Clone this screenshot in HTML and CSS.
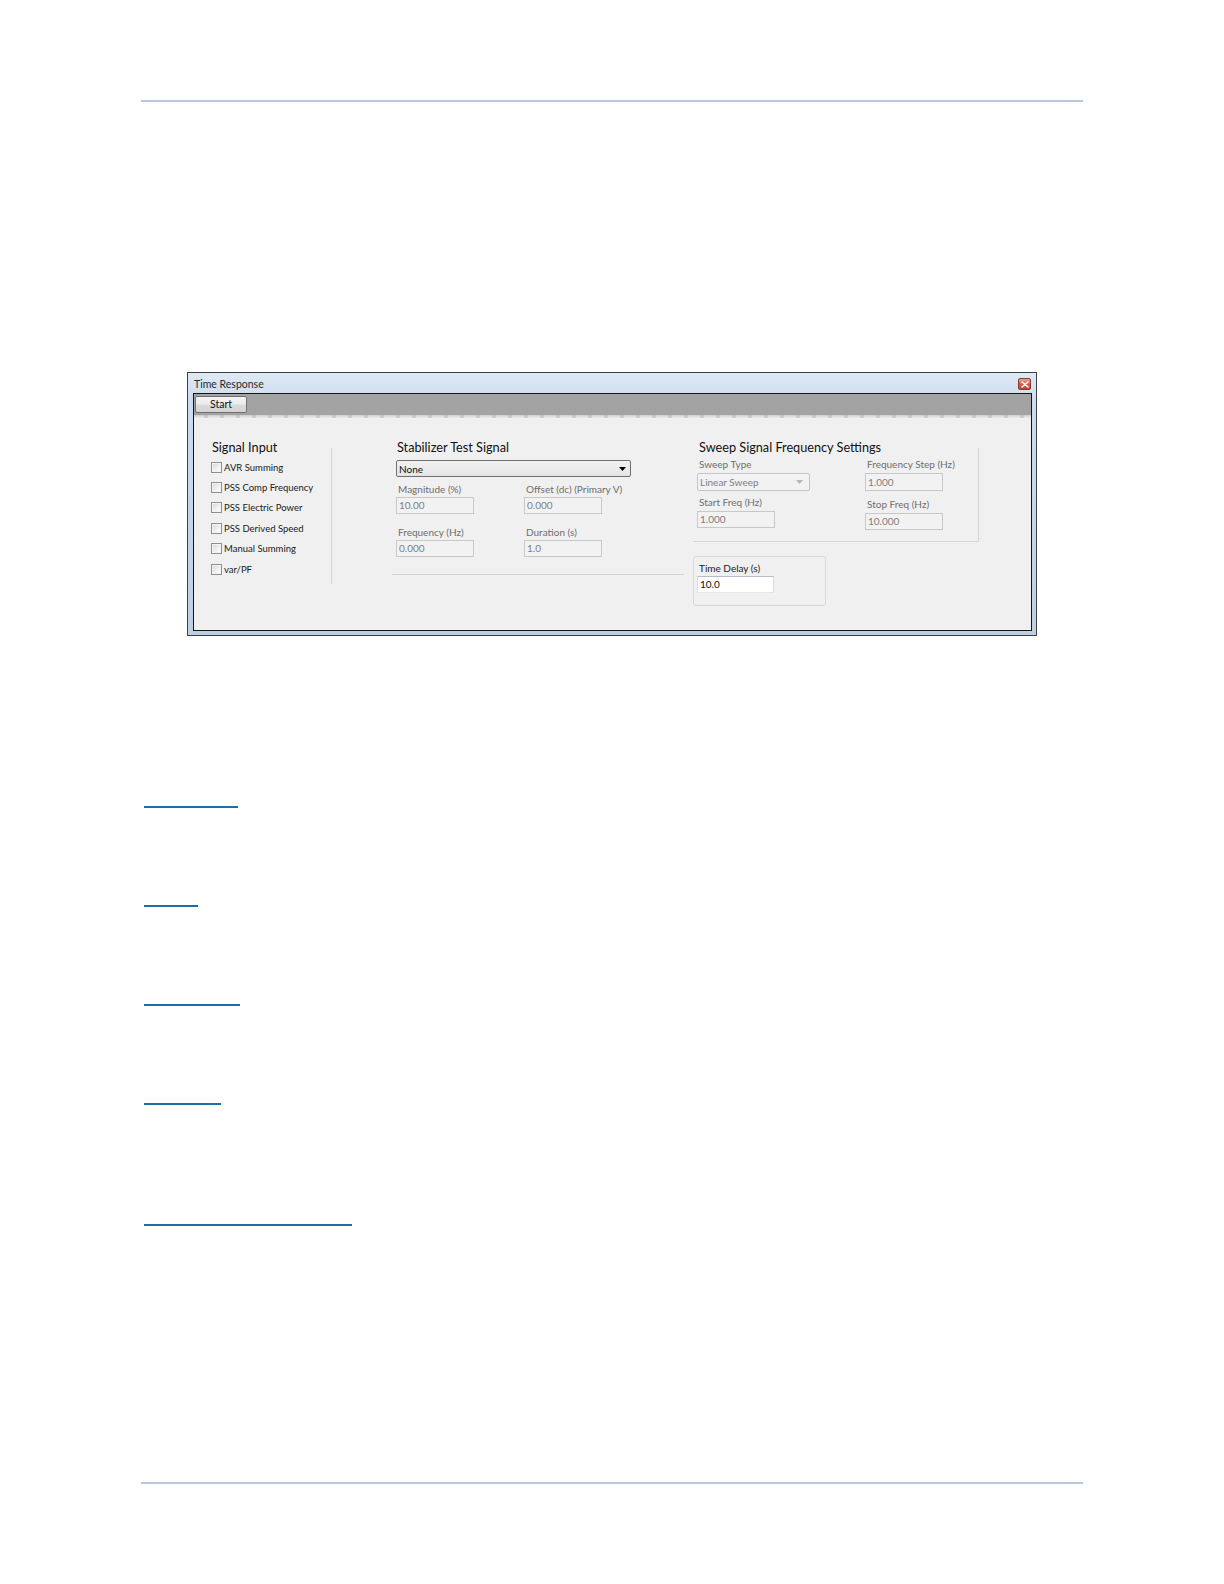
FILE: index.html
```html
<!DOCTYPE html>
<html>
<head>
<meta charset="utf-8">
<title>Time Response</title>
<link rel="stylesheet" href="styles.css">
</head>
<body>
<div class="page">
  <div class="rule rule-top"></div>

  <div class="win">
    <div class="titlebar">
      <span class="title">Time Response</span>
      <span class="close"><svg width="8" height="7" viewBox="0 0 8 7"><path d="M1 1 L7 6 M7 1 L1 6" stroke="#fff" stroke-width="1.6" stroke-linecap="round"/></svg></span>
    </div>
    <div class="client">
      <div class="toolbar">
        <button class="btn">Start</button>
      </div>
      <div class="fringe"></div>
      <div class="content">
        <div class="col1">
          <div class="gtitle">Signal Input</div>
          <div class="chk"><span class="box"></span><span>AVR Summing</span></div>
          <div class="chk"><span class="box"></span><span>PSS Comp Frequency</span></div>
          <div class="chk"><span class="box"></span><span>PSS Electric Power</span></div>
          <div class="chk"><span class="box"></span><span>PSS Derived Speed</span></div>
          <div class="chk"><span class="box"></span><span>Manual Summing</span></div>
          <div class="chk"><span class="box"></span><span>var/PF</span></div>
        </div>

        <div class="col2">
          <div class="gtitle t2">Stabilizer Test Signal</div>
          <div class="combo">
            <span>None</span>
            <svg width="7" height="4" viewBox="0 0 7 4"><path d="M0 0 H7 L3.5 4 Z" fill="#000"/></svg>
          </div>
          <div class="fields">
            <div class="field">
              <div class="lbl dim">Magnitude (%)</div>
              <div class="inp dis">10.00</div>
            </div>
            <div class="field">
              <div class="lbl dim">Offset (dc) (Primary V)</div>
              <div class="inp dis">0.000</div>
            </div>
            <div class="field r2">
              <div class="lbl dim">Frequency (Hz)</div>
              <div class="inp dis">0.000</div>
            </div>
            <div class="field r2">
              <div class="lbl dim">Duration (s)</div>
              <div class="inp dis">1.0</div>
            </div>
          </div>
        </div>

        <div class="col3">
          <div class="sweep">
            <div class="gtitle t3">Sweep Signal Frequency Settings</div>
            <div class="sfields">
              <div class="sfield">
                <div class="lbl dim">Sweep Type</div>
                <div class="combo dis-combo">
                  <span>Linear Sweep</span>
                  <svg width="7" height="4" viewBox="0 0 7 4"><path d="M0 0 H7 L3.5 4 Z" fill="#b5b5b5"/></svg>
                </div>
              </div>
              <div class="sfield">
                <div class="lbl dim">Frequency Step (Hz)</div>
                <div class="inp dis">1.000</div>
              </div>
              <div class="sfield sr2">
                <div class="lbl dim">Start Freq (Hz)</div>
                <div class="inp dis">1.000</div>
              </div>
              <div class="sfield sr2 shift">
                <div class="lbl dim">Stop Freq (Hz)</div>
                <div class="inp dis">10.000</div>
              </div>
            </div>
          </div>
          <div class="delay">
            <div class="lbl">Time Delay (s)</div>
            <div class="inp live">10.0</div>
          </div>
        </div>
      </div>
    </div>
  </div>

  <div class="links">
    <div class="uline" style="width:94px"></div>
    <div class="uline" style="width:54px"></div>
    <div class="uline" style="width:96px"></div>
    <div class="uline" style="width:77px"></div>
    <div class="uline last" style="width:208px"></div>
  </div>

  <div class="rule rule-bottom"></div>
</div>
</body>
</html>
```

FILE: styles.css
```css
html, body {
  margin: 0;
  padding: 0;
  background: #ffffff;
}

.page {
  width: 1224px;
  height: 1584px;
  overflow: hidden;
  padding-top: 100px;
  box-sizing: border-box;
  font-family: "Lato", "Liberation Sans", sans-serif;
  color: #1a1a1a;
  display: flex;
  flex-direction: column;
}

.rule {
  margin-left: 141px;
  width: 942px;
  height: 2px;
  flex: none;
  background: #b7c9de;
}

/* ---------- window ---------- */
.win {
  margin-top: 270px;
  margin-left: 187px;
  width: 850px;
  height: 264px;
  flex: none;
  box-sizing: border-box;
  border: 1px solid #3e4247;
  background: linear-gradient(#dfe9f5 0%, #cddcee 10%, #bfcfe2 100%);
  padding: 0 4px 4px 5px;
  display: flex;
  flex-direction: column;
}

.titlebar {
  height: 20px;
  flex: none;
  display: flex;
  align-items: center;
  justify-content: space-between;
  padding-left: 1px;
}

.title {
  font-size: 10.5px;
  color: #2a2a2a;
  margin-top: 1px;
}

.close {
  width: 13px;
  height: 12px;
  margin-right: 1px;
  margin-top: 2px;
  box-sizing: border-box;
  border: 1px solid #8c3a2c;
  border-radius: 2px;
  background: linear-gradient(#e9a394, #d2604c 50%, #c0432f);
  display: flex;
  align-items: center;
  justify-content: center;
}

.client {
  flex: 1;
  border: 1px solid #151515;
  background: #f0f0f0;
  display: flex;
  flex-direction: column;
  min-height: 0;
}

.toolbar {
  height: 21px;
  flex: none;
  background: #a3a3a3;
  padding: 2px 0 0 1px;
  box-sizing: border-box;
}

.fringe {
  height: 3px;
  flex: none;
  background:
    repeating-linear-gradient(90deg, transparent 0 10px, rgba(160,160,160,0.35) 10px 14px, transparent 14px 16px),
    linear-gradient(#cdcdcd, #ededed);
}

.btn {
  display: block;
  width: 52px;
  height: 17px;
  padding: 0;
  border: 1px solid #707070;
  border-radius: 2px;
  background: linear-gradient(#f4f4f4 0%, #ebebeb 48%, #dcdcdc 52%, #d2d2d2 100%);
  font-family: "Lato", "Liberation Sans", sans-serif;
  font-size: 10.5px;
  color: #111;
  line-height: 15px;
}

.content {
  flex: 1;
  display: flex;
  align-items: flex-start;
  padding-top: 22px;
}

.gtitle {
  font-size: 12.7px;
  line-height: 14px;
  height: 14px;
  color: #111;
  white-space: nowrap;
}

.lbl {
  font-size: 10px;
  line-height: 12px;
  height: 14px;
  padding-left: 2px;
  white-space: nowrap;
  color: #1a1a1a;
}

.lbl.dim {
  color: #6e6e6e;
}

/* ---------- column 1 ---------- */
.col1 {
  position: relative;
  margin-left: 17px;
  width: 121px;
  height: 144px;
  flex: none;
}

.col1::after {
  content: "";
  position: absolute;
  right: 0;
  top: 8px;
  width: 1px;
  height: 136px;
  background: #d6d6d6;
}

.col1 .gtitle {
  padding-left: 1px;
  margin-bottom: 3px;
}

.chk {
  height: 20.4px;
  display: flex;
  align-items: center;
  font-size: 9.5px;
  white-space: nowrap;
  color: #1a1a1a;
}

.box {
  width: 11px;
  height: 11px;
  flex: none;
  box-sizing: border-box;
  border: 1px solid #8f8f8f;
  background: linear-gradient(135deg, #d6d6d6, #f6f6f6 70%, #ffffff);
  box-shadow: inset 0 0 0 1px #f4f4f4;
  margin-right: 2px;
}

/* ---------- column 2 ---------- */
.col2 {
  margin-left: 60px;
  width: 292px;
  height: 134px;
  flex: none;
  border-bottom: 1px solid #d6d6d6;
}

.t2 {
  padding-left: 5px;
}

.combo {
  margin: 6px 0 0 4px;
  width: 235px;
  height: 17px;
  box-sizing: border-box;
  border: 1px solid #707070;
  border-radius: 2px;
  background: linear-gradient(#f2f2f2, #e4e4e4);
  display: flex;
  align-items: center;
  justify-content: space-between;
  padding: 0 4px 0 2px;
  font-size: 10px;
  color: #111;
}

.fields {
  display: grid;
  grid-template-columns: 128px 128px;
  padding-left: 4px;
  margin-top: 6px;
}

.field.r2 {
  margin-top: 12px;
}

.inp {
  width: 78px;
  height: 17px;
  box-sizing: border-box;
  border: 1px solid #c7c7c7;
  font-size: 10px;
  line-height: 15px;
  padding-left: 2px;
}

.inp.dis {
  background: #f2f2f2;
  color: #808080;
  border-color: #c8c8c8;
}

.inp.live {
  background: #ffffff;
  color: #111;
  border-color: #b8bcc4 #dadde2 #e3e6ea #dadde2;
  width: 77px;
}

/* ---------- column 3 ---------- */
.col3 {
  margin-left: 9px;
  width: 286px;
  flex: none;
  display: flex;
  flex-direction: column;
}

.sweep {
  position: relative;
  height: 101px;
  border-bottom: 1px solid #d6d6d6;
}

.sweep::after {
  content: "";
  position: absolute;
  right: 0;
  top: 8px;
  width: 1px;
  height: 94px;
  background: #d6d6d6;
}

.t3 {
  padding-left: 6px;
}

.sfields {
  display: grid;
  grid-template-columns: 168px 100px;
  padding-left: 4px;
  margin-top: 5px;
}

.sfield .lbl {
  line-height: 10px;
}

.sfield.sr2 {
  margin-top: 6px;
}

.sfield.shift {
  margin-top: 8px;
}

.sfield .inp {
  height: 18px;
  line-height: 16px;
}

.sfield.sr2 .inp {
  height: 17px;
  line-height: 15px;
}

.combo.dis-combo {
  margin: 0;
  width: 113px;
  height: 18px;
  border-color: #c5c5c5;
  background: #f2f2f2;
  color: #808080;
  padding-right: 6px;
}

.delay {
  margin-top: 14px;
  width: 133px;
  height: 50px;
  box-sizing: border-box;
  border: 1px solid #d8d8d8;
  border-radius: 3px;
  padding: 5px 0 0 3px;
}

.delay .lbl {
  padding-left: 2px;
  line-height: 12px;
}

/* ---------- underlines ---------- */
.links {
  margin-left: 144px;
  padding-top: 170px;
  display: flex;
  flex-direction: column;
  flex: none;
}

.uline {
  height: 2px;
  flex: none;
  background: #1f6ea8;
  margin-bottom: 97px;
}

.uline.last {
  margin-top: 22px;
}

.rule-bottom {
  margin-top: 159px;
}
```
